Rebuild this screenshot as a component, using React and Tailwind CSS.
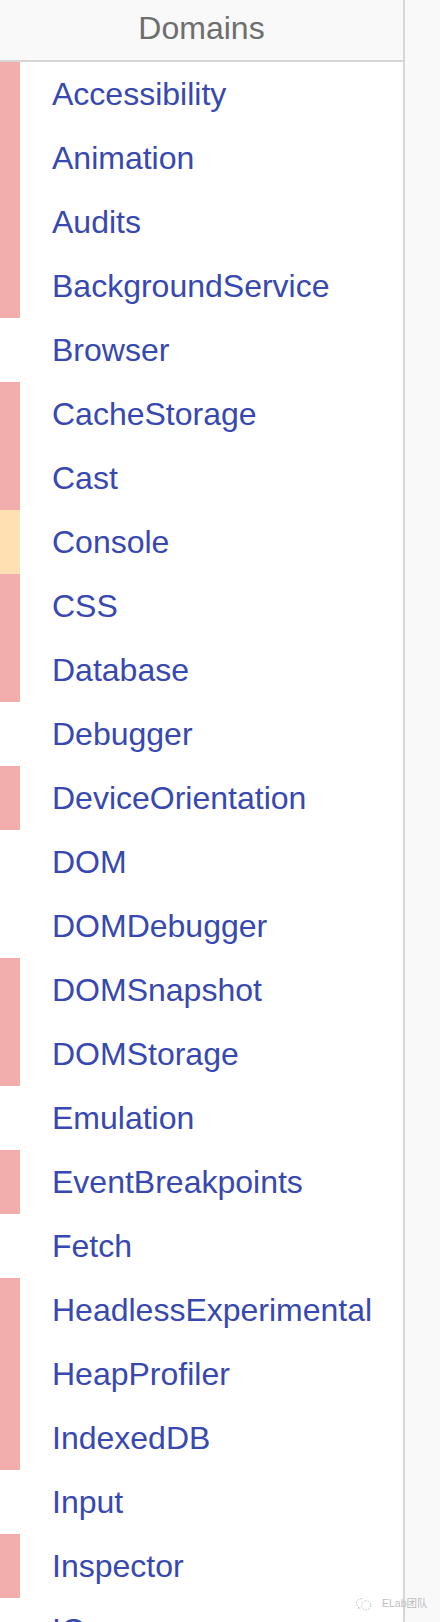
const domains = [
  ['Accessibility', 'red'],
  ['Animation', 'red'],
  ['Audits', 'red'],
  ['BackgroundService', 'red'],
  ['Browser', null],
  ['CacheStorage', 'red'],
  ['Cast', 'red'],
  ['Console', 'amber'],
  ['CSS', 'red'],
  ['Database', 'red'],
  ['Debugger', null],
  ['DeviceOrientation', 'red'],
  ['DOM', null],
  ['DOMDebugger', null],
  ['DOMSnapshot', 'red'],
  ['DOMStorage', 'red'],
  ['Emulation', null],
  ['EventBreakpoints', 'red'],
  ['Fetch', null],
  ['HeadlessExperimental', 'red'],
  ['HeapProfiler', 'red'],
  ['IndexedDB', 'red'],
  ['Input', null],
  ['Inspector', 'red'],
  ['IO', null],
];

const stripColors = {
  red: 'bg-[#f2adad]',
  amber: 'bg-[#ffe0b3]',
};

export default function App() {
  return (
    <div className="relative h-[1622px] w-[440px] overflow-hidden bg-[#f9f9f9] font-['Liberation_Sans',Arial,sans-serif]">
      <div className="h-full w-[405px] border-r-2 border-[#d6d6d6] bg-white">
        {/* Header */}
        <div className="h-[62px] border-b-2 border-[#d6d6d6] bg-[#f9f9f9] text-center text-[32px] leading-[56px] text-[#6e6e6e]">
          Domains
        </div>

        {/* Domain list */}
        <div>
          {domains.map(([name, status]) => (
            <div key={name} className="flex h-16 items-center">
              <div className={`h-full w-5 shrink-0 ${status ? stripColors[status] : ''}`}></div>
              <div className="pl-8 text-[32px] leading-[64px] text-[#3748b0]">{name}</div>
            </div>
          ))}
        </div>
      </div>

      {/* Watermark */}
      <div className="absolute left-[355px] top-[1595px] flex items-center gap-[9px] text-[10.5px] leading-4 text-[#bdbdbd] font-['Liberation_Sans','Noto_Sans_CJK_SC',sans-serif]">
        <svg width="18" height="15" viewBox="0 0 20 16" fill="none" stroke="#bdbdbd" strokeWidth="1" strokeDasharray="2 1.5">
          <path d="M8 2.5C4.5 2.5 1.5 4.8 1.5 7.8c0 1.7 1 3.2 2.5 4.1L3.5 14l2.3-1.2c.7.2 1.4.3 2.2.3" />
          <circle cx="12.5" cy="10" r="5" />
        </svg>
        <span>ELab团队</span>
      </div>
    </div>
  );
}
